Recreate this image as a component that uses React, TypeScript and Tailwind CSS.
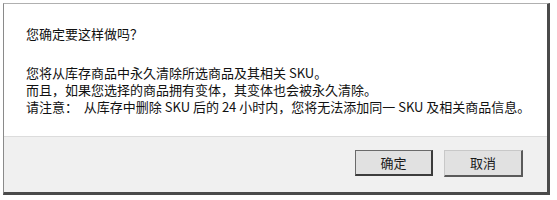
import React from "react";

const font = {
  fontFamily: '"Microsoft YaHei", "Noto Sans CJK SC", "Liberation Sans", sans-serif',
};

function DialogButton({ label, primary }: { label: string; primary?: boolean }) {
  return (
    <button
      type="button"
      className={
        primary
          ? "flex h-[26px] w-[78px] items-center justify-center border border-[#6a6a6a] border-b-2 border-r-2 border-b-[#3c3c3c] border-r-[#3c3c3c] bg-[#e1e1e1] text-[13px] text-[#1a1a1a]"
          : "flex h-[27px] w-[79px] items-center justify-center border border-[#c8c8c8] border-b-2 border-r-2 border-b-[#5a5a5a] border-r-[#5a5a5a] bg-[#e1e1e1] text-[13px] text-[#1a1a1a]"
      }
    >
      {label}
    </button>
  );
}

export default function App() {
  return (
    <div className="h-[200px] w-[557px] bg-white pl-[3px] pt-[3px]" style={font}>
      <div className="flex h-[192px] w-[547px] flex-col border border-[#8a8a8a] border-b-[3px] border-r-[3px] border-b-[#4a4a4a] border-r-[#4a4a4a] border-t-[#b0b0b0] bg-white">
        <div className="flex h-[132px] flex-col pl-[22px] pt-[21px] text-[13px] leading-[17px] text-[#111]">
          <p>您确定要这样做吗？</p>
          <div className="mt-[22px] flex flex-col">
            <p>您将从库存商品中永久清除所选商品及其相关 SKU。</p>
            <p>而且，如果您选择的商品拥有变体，其变体也会被永久清除。</p>
            <p className="whitespace-pre">请注意：  从库存中删除 SKU 后的 24 小时内，您将无法添加同一 SKU 及相关商品信息。</p>
          </div>
        </div>
        <div className="flex flex-1 items-start justify-end gap-[11px] border-t border-[#dcdcdc] bg-[#f0f0f0] pr-[24px] pt-[13px]">
          <DialogButton label="确定" primary />
          <DialogButton label="取消" />
        </div>
      </div>
    </div>
  );
}
